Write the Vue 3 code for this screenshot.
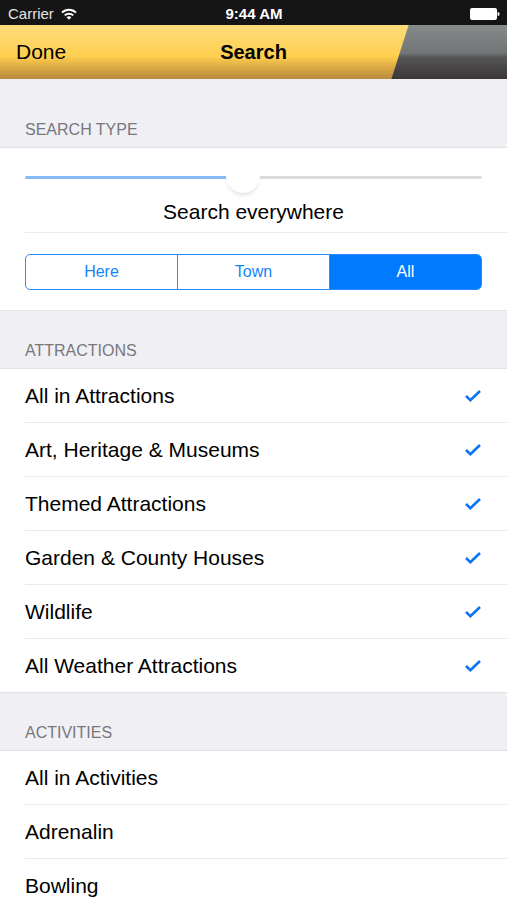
<script setup>
import { ref, computed } from 'vue'

const sliderMax = 40
const distance = ref(19)
const fill = computed(() => distance.value / sliderMax * 100 + '%')

const scopes = ['Here', 'Town', 'All']
const scope = ref('All')

const groups = ref([
    {
        title: 'Attractions',
        items: [
            { name: 'All in Attractions', checked: true },
            { name: 'Art, Heritage & Museums', checked: true },
            { name: 'Themed Attractions', checked: true },
            { name: 'Garden & County Houses', checked: true },
            { name: 'Wildlife', checked: true },
            { name: 'All Weather Attractions', checked: true },
        ],
    },
    {
        title: 'Activities',
        items: [
            { name: 'All in Activities', checked: false },
            { name: 'Adrenalin', checked: false },
            { name: 'Bowling', checked: false },
        ],
    },
])
</script>

<template>
    <div class="screen">
        <div class="status">
            <div class="carrier">
                <span>Carrier</span>
                <svg width="16" height="12" viewBox="0 0 16 12" fill="none" stroke="#fff" stroke-width="2">
                    <path d="M1 4.6a10 10 0 0 1 14 0" />
                    <path d="M3.7 7.4a6.2 6.2 0 0 1 8.6 0" />
                    <path d="M8 11.8 5.6 9.3a3.5 3.5 0 0 1 4.8 0z" fill="#fff" stroke="none" />
                </svg>
            </div>
            <span class="time">9:44 AM</span>
            <div class="battery">
                <svg width="31" height="12" viewBox="0 0 31 12" fill="#fff">
                    <rect x="1" y="0" width="27" height="12" rx="2" />
                    <path d="M28.6 4a2 2 0 0 1 0 4z" />
                </svg>
            </div>
        </div>

        <header class="nav">
            <button class="done">Done</button>
            <h1>Search</h1>
        </header>

        <main>
            <section>
                <h2 class="first">Search Type</h2>
                <div class="card">
                    <div class="range">
                        <input id="distance" v-model.number="distance" type="range" min="0" :max="sliderMax"
                            :style="{ '--fill': fill }">
                        <label for="distance">Search everywhere</label>
                    </div>
                    <div class="scope">
                        <div class="segments">
                            <button v-for="s in scopes" :key="s" :class="{ active: s === scope }"
                                :aria-pressed="s === scope" @click="scope = s">{{ s }}</button>
                        </div>
                    </div>
                </div>
            </section>

            <section v-for="group in groups" :key="group.title">
                <h2>{{ group.title }}</h2>
                <ul>
                    <li v-for="item in group.items" :key="item.name">
                        <label class="row">
                            <span>{{ item.name }}</span>
                            <input v-model="item.checked" type="checkbox">
                            <svg v-if="item.checked" width="16" height="12" viewBox="0 0 16 12" fill="none"
                                stroke="#0a74f5" stroke-width="2.6">
                                <path d="M1 6 5.4 10.2 15 1" />
                            </svg>
                        </label>
                    </li>
                </ul>
            </section>
        </main>
    </div>
</template>

<style>
body {
    margin: 0;
}
</style>

<style scoped>
.screen {
    height: 100vh;
    display: flex;
    flex-direction: column;
    background: #efeff4;
    color: #000;
    font-family: "Liberation Sans", Arial, sans-serif;
    font-size: 21px;
}

button {
    border: none;
    padding: 0;
    background: transparent;
    color: inherit;
    font: inherit;
    cursor: pointer;
}

.status {
    flex: none;
    display: grid;
    grid-template-columns: 1fr auto 1fr;
    align-items: center;
    height: 25px;
    padding: 2px 7px 0 8px;
    box-sizing: border-box;
    background: #151515;
    color: #fff;
    font-size: 15px;
    line-height: 20px;
}

.carrier {
    display: flex;
    align-items: center;
    gap: 7px;
    color: #e4e4e4;
}

.time {
    font-weight: bold;
}

.battery {
    display: flex;
    justify-content: flex-end;
}

.nav {
    flex: none;
    position: relative;
    display: grid;
    grid-template-columns: 1fr auto 1fr;
    align-items: center;
    height: 54px;
    padding: 0 16px;
    background: linear-gradient(#858a8b, #727576 52%, #565455 60%, #3b3737);
}

/* gold plate with the slanted right edge */
.nav::before {
    content: "";
    position: absolute;
    inset: 0;
    background: linear-gradient(#fcdc7e, #ffcf4e 58%, #dba945 78%, #b98a40);
    clip-path: polygon(0 0, 80.6% 0, 77.2% 100%, 0 100%);
}

.done,
.nav h1 {
    position: relative;
}

.done {
    justify-self: start;
}

.nav h1 {
    margin: 0;
    font-size: 20px;
}

main {
    flex: 1;
    min-height: 0;
    overflow-y: auto;
    scrollbar-width: none;
}

h2 {
    height: 59px;
    margin: 0;
    padding: 0 25px 8px;
    box-sizing: border-box;
    display: flex;
    align-items: flex-end;
    border-top: 1px solid #e2e2e6;
    border-bottom: 1px solid #e2e2e6;
    color: #77777c;
    font-size: 16px;
    font-weight: normal;
    line-height: 18px;
    text-transform: uppercase;
}

h2.first {
    height: 69px;
    border-top: none;
}

.card,
ul {
    background: #fff;
}

.range {
    display: flex;
    flex-direction: column;
    align-items: center;
    gap: 6px;
    margin-left: 25px;
    padding: 12px 25px 8px 0;
    border-bottom: 1px solid #ebebed;
    line-height: 24px;
}

.range input {
    appearance: none;
    width: 100%;
    height: 34px;
    margin: 0;
    background: transparent;
}

.range input::-webkit-slider-runnable-track {
    height: 3px;
    border-radius: 2px;
    background: linear-gradient(to right, #84bbf8 var(--fill), #dcdcdd var(--fill));
}

.range input::-webkit-slider-thumb {
    appearance: none;
    width: 34px;
    height: 34px;
    margin-top: -17px;
    border-radius: 50%;
    background: #fff;
    box-shadow: 0 4px 4px -2px rgba(0, 0, 0, 0.14);
}

.scope {
    padding: 21px 25px 20px;
}

.segments {
    display: flex;
    height: 36px;
    box-sizing: border-box;
    border: 1px solid #2b8dfb;
    border-radius: 5px;
    overflow: hidden;
    color: #1683fb;
    font-size: 16px;
}

.segments button {
    flex: 1;
}

.segments button+button {
    border-left: 1px solid #2b8dfb;
}

.segments button.active {
    background: #007aff;
    color: #fff;
}

ul {
    margin: 0;
    padding: 0 0 0 25px;
    list-style: none;
}

li+li {
    border-top: 1px solid #e9e9eb;
}

.row {
    display: flex;
    align-items: center;
    justify-content: space-between;
    height: 53px;
    padding-right: 26px;
}

.row input {
    appearance: none;
    width: 0;
    height: 0;
    margin: 0 0 0 auto;
}
</style>
